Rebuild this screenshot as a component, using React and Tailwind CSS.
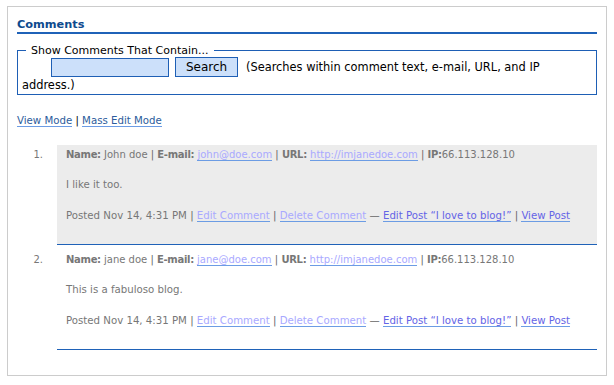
const comments = [
  { n: 1, name: 'John doe', email: 'john@doe.com', text: 'I like it too.', shaded: true },
  { n: 2, name: 'jane doe', email: 'jane@doe.com', text: 'This is a fabuloso blog.', shaded: false },
]

function Link({ className, children }) {
  return <a href="#" className={`border-b border-[#6c9ce4] ${className}`}>{children}</a>
}

function Label({ children }) {
  return <b className="tracking-[-0.3px]">{children}</b>
}

function Sep({ children = '|' }) {
  return <span className="text-[#666]">{children}</span>
}

function Comment({ c }) {
  return (
    <li className="flex">
      <span className="w-[26px] text-right text-[10px] leading-[14px] text-[#777] pt-[3px]">{c.n}.</span>
      <div className={`ml-[14px] flex-1 border-b border-[#1f62b8] pl-[9px] pt-[3px] pb-[21px] ${c.shaded ? 'bg-[#ececec]' : ''}`}>
        <div className="text-[10px] leading-[14px] text-[#777]">
          <Label>Name:</Label> {c.name} <Sep /> <Label>E-mail:</Label>{' '}
          <Link className="text-[#a9a9ff]">{c.email}</Link> <Sep /> <Label>URL:</Label>{' '}
          <Link className="text-[#a9a9ff]">http://imjanedoe.com</Link> <Sep /> <Label>IP:</Label>66.113.128.10
        </div>
        <div className="mt-[16px] text-[10.2px] leading-[14px] text-[#777]">{c.text}</div>
        <div className="mt-[17px] text-[10.2px] leading-[14px] text-[#777]">
          Posted Nov 14, 4:31 PM <Sep />{' '}
          <Link className="text-[#a9a9ff]">Edit Comment</Link> <Sep />{' '}
          <Link className="text-[#a9a9ff]">Delete Comment</Link> <Sep>—</Sep>{' '}
          <Link className="text-[#6464e6]">Edit Post “I love to blog!”</Link> <Sep />{' '}
          <Link className="text-[#6464e6]">View Post</Link>
        </div>
      </div>
    </li>
  )
}

export default function App() {
  return (
    <div className="bg-white w-[614px] h-[385px] pt-[6px] pl-[7px] font-['DejaVu_Sans',Verdana,sans-serif]">
      <div className="w-[600px] h-[370px] border border-[#cccccc] pt-[11px] pl-[9px] pr-[9px]">
        <h2 className="text-[11.3px] leading-[14px] font-bold text-[#0d4a8e] border-b-2 border-[#1f62b8]">Comments</h2>

        <fieldset className="mt-[10px] border border-[#1e5fb5] pl-[4px] pr-[4px]">
          <legend className="ml-[4px] px-[5px] text-[11px] leading-[13px] text-black">Show Comments That Contain...</legend>
          <div className="indent-[29px] text-[11.4px] leading-[17px] text-black">
            <input type="text" className="w-[118px] h-[19px] bg-[#cce0fa] border border-[#1e5fb5] align-middle" />
            <button className="ml-[6px] w-[63px] h-[20px] bg-[#cce0fa] border border-[#1e5fb5] text-[12px] leading-[18px] indent-0 align-middle">Search</button>
            <span className="ml-[8px]">(Searches within comment text, e-mail, URL, and IP</span>{' '}
            <span>address.)</span>
          </div>
        </fieldset>

        <div className="mt-[19px] text-[10.2px] leading-[14px] text-black">
          <Link className="text-[#2c5c9c]">View Mode</Link> | <Link className="text-[#2c5c9c]">Mass Edit Mode</Link>
        </div>

        <ul className="mt-[17px] flex flex-col gap-[5px]">
          {comments.map(c => <Comment key={c.n} c={c} />)}
        </ul>
      </div>
    </div>
  )
}
